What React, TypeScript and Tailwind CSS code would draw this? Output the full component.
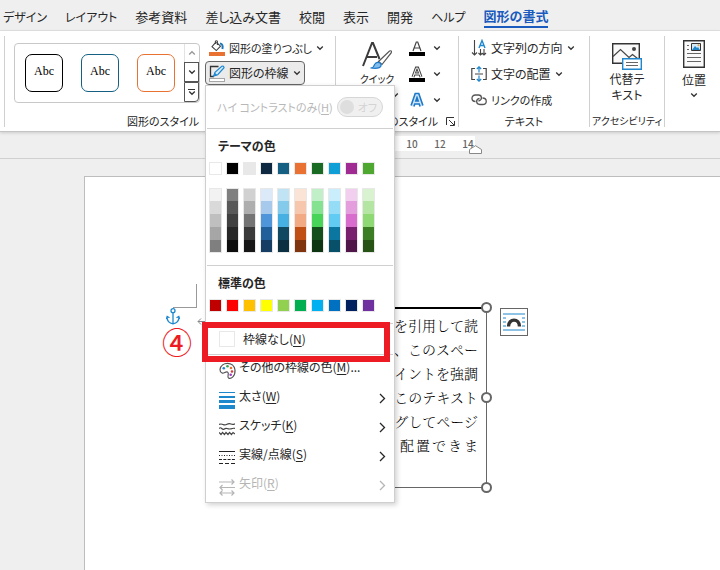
import type { ReactNode } from "react";

const themeColors = [
  "bg-white", "bg-black", "bg-[#e8e8e8]", "bg-[#0e2841]", "bg-[#156082]",
  "bg-[#e97132]", "bg-[#196b24]", "bg-[#0f9ed5]", "bg-[#a02b93]", "bg-[#4ea72e]",
];

const shadeColumns = [
  ["bg-[#f2f2f2]", "bg-[#d9d9d9]", "bg-[#bfbfbf]", "bg-[#a6a6a6]", "bg-[#7f7f7f]"],
  ["bg-[#7f7f7f]", "bg-[#595959]", "bg-[#404040]", "bg-[#262626]", "bg-[#0d0d0d]"],
  ["bg-[#d1d1d1]", "bg-[#aeaeae]", "bg-[#747474]", "bg-[#3a3a3a]", "bg-[#171717]"],
  ["bg-[#dce9f8]", "bg-[#a6c9ec]", "bg-[#4e95d9]", "bg-[#215f9a]", "bg-[#163e64]"],
  ["bg-[#c1e4f5]", "bg-[#83caeb]", "bg-[#45b0e1]", "bg-[#104862]", "bg-[#0b3041]"],
  ["bg-[#fbe3d6]", "bg-[#f6c6ad]", "bg-[#f2aa84]", "bg-[#c04f15]", "bg-[#80350e]"],
  ["bg-[#c1f0c8]", "bg-[#84e290]", "bg-[#47d459]", "bg-[#13501b]", "bg-[#0d3512]"],
  ["bg-[#caeefb]", "bg-[#95dcf7]", "bg-[#61cbf4]", "bg-[#0b76a0]", "bg-[#084f6a]"],
  ["bg-[#f2ceef]", "bg-[#e59edd]", "bg-[#d86dcd]", "bg-[#78206e]", "bg-[#50164a]"],
  ["bg-[#d9f2d0]", "bg-[#b4e5a2]", "bg-[#8ed973]", "bg-[#3b7d23]", "bg-[#275317]"],
];

const standardColors = [
  "bg-[#c00000]", "bg-[#ff0000]", "bg-[#ffc000]", "bg-[#ffff00]", "bg-[#92d050]",
  "bg-[#00b050]", "bg-[#00b0f0]", "bg-[#0070c0]", "bg-[#002060]", "bg-[#7030a0]",
];

const tabs = [
  { name: "デザイン", size: "text-[12px]" },
  { name: "レイアウト", size: "text-[12px]" },
  { name: "参考資料", size: "text-[13px]" },
  { name: "差し込み文書", size: "text-[13px]" },
  { name: "校閲", size: "text-[13px]" },
  { name: "表示", size: "text-[13px]" },
  { name: "開発", size: "text-[13px]" },
  { name: "ヘルプ", size: "text-[12px]" },
];

function Chevron() {
  return (
    <svg width="8" height="6" viewBox="0 0 8 6" fill="none" stroke="#333" strokeWidth="1.3" className="shrink-0">
      <path d="M1.2 1.5 4 4.3 6.8 1.5" />
    </svg>
  );
}

function FillIcon() {
  return (
    <svg width="16" height="17" viewBox="0 0 16 17" fill="none" className="shrink-0">
      <rect y="12" width="16" height="4" fill="#e97132" />
      <path d="M6.2 2.8 3 6.7 7.3 10.6 11.5 6.2 8 2.8ZM8.4 5V1.2Q7.4.2 6.4 1.2V4" stroke="#444" strokeWidth="1.1" />
      <path d="M11 3.6Q14.5 4 13.4 9" stroke="#1c78b8" strokeWidth="2" />
    </svg>
  );
}

function OutlineIcon() {
  return (
    <svg width="16" height="17" viewBox="0 0 16 17" fill="none" className="shrink-0">
      <path d="M9.5 1.5H1.5V11.5H5" stroke="#333" strokeWidth="1.3" />
      <path d="M4.7 11 6 7.3 12.8 1.2Q14.8.5 15 2.7L8.7 9.7Z" fill="#d8ecfa" stroke="#1e88d2" strokeWidth="1.2" />
      <path d="m4.5 11.3 1.3-3.5 2.4 2.3Z" fill="#1e88d2" />
      <rect x=".5" y="13.5" width="15" height="3" fill="#fff" stroke="#a6a6a6" />
    </svg>
  );
}

function QuickStyleIcon() {
  return (
    <svg width="32" height="30" viewBox="0 0 32 30" fill="none" className="shrink-0">
      <path d="M2 25 11 2H12L18.5 18M5.5 16H16" stroke="#3b3b3b" strokeWidth="2" />
      <path d="M17.5 20.5 28.5 10Q31 9 30.3 11.7L21 23.5Z" fill="#fff" stroke="#555" strokeWidth="1.2" />
      <path d="M9.5 27Q13 26.5 13.5 23.5 16 20 19.7 22.5 22 28.5 9.5 27Z" fill="#83bdec" stroke="#1e78c8" strokeWidth="1.2" />
    </svg>
  );
}

function LetterIcon({ kind }: { kind: "fill" | "outline" | "effect" }) {
  const path = "M4 11 7.3 2H8.7L12 11M5 8H11";
  return (
    <svg width="16" height="16" viewBox="0 0 16 16" fill="none">
      {kind === "fill" && <path d={path} stroke="#444" strokeWidth="1.2" />}
      {kind === "outline" && (
        <>
          <path d={path} stroke="#444" strokeWidth="3" />
          <path d={path} stroke="#fff" strokeWidth="1" />
        </>
      )}
      {kind === "effect" ? (
        <>
          <path d="M3.5 14 7.3 3H8.7L12.5 14M5 10.5H11" stroke="#1e78c8" strokeWidth="4.6" />
          <path d="M3.5 14 7.3 3H8.7L12.5 14M5 10.5H11" stroke="#cfe6fa" strokeWidth="1.4" />
        </>
      ) : (
        <rect y="12" width="16" height="4" fill="#000" />
      )}
    </svg>
  );
}

function DirectionIcon() {
  return (
    <svg width="16" height="18" viewBox="0 0 16 18" fill="none" stroke="#444" strokeWidth="1.1" className="shrink-0">
      <path d="M3.5 1V16M1 13.5 3.5 16 6 13.5M9.5 10V16M7.5 14 9.5 16 11.5 14M13 10V16M11.5 14.5 13 16 15 14" />
      <path d="M8 9 11 1.5 14 9M9 6.5H13" stroke="#2087cc" strokeWidth="1.4" />
    </svg>
  );
}

function AlignIcon() {
  return (
    <svg width="16" height="16" viewBox="0 0 16 16" fill="none" stroke="#444" strokeWidth="1.2" className="shrink-0">
      <path d="M4 2.5H.8V13.5H4M12 2.5H15.2V13.5H12M4 8H12" />
      <path d="M8 .8V6.5M5.8 3 8 .8 10.2 3M8 9.5V15.2M5.8 13 8 15.2 10.2 13" stroke="#2087cc" />
    </svg>
  );
}

function LinkIcon() {
  return (
    <svg width="16" height="14" viewBox="0 0 16 14" fill="none" stroke="#555" strokeWidth="1.3" className="shrink-0">
      <path d="M4.5 8.5C-.2 8.5-.2 2 4.5 2H7.5C11 2 11.8 7 7.5 8" />
      <path d="M11.5 5C16.5 5 16.5 11.5 11.5 11.5H8.8C5 11.5 4.3 6.3 8.5 5.4" />
    </svg>
  );
}

function AltTextIcon() {
  return (
    <svg width="30" height="28" viewBox="0 0 30 28" fill="none">
      <path d="M.7.7H27.3V20.3H.7Z" fill="#fafafa" stroke="#333" strokeWidth="1.4" />
      <path d="m1 13.5 7.5-7 8.5 8 3.5-3 5 4" stroke="#444" strokeWidth="1.2" />
      <circle cx="22" cy="6" r="2" fill="#444" />
      <path d="M10.7 15.7H29.3V26.3H10.7Z" fill="#fff" stroke="#2087cc" strokeWidth="1.4" />
      <path d="M14 19.5H26M14 22.5H26" stroke="#666" />
    </svg>
  );
}

function PositionIcon() {
  return (
    <svg width="22" height="28" viewBox="0 0 22 28" fill="none">
      <path d="M.7.7H21.3V27.3H.7Z" fill="#fafafa" stroke="#333" strokeWidth="1.4" />
      <path d="M4 5.5H6M4 9.5H6M4 13.5H18M4 17.5H18M4 21.5H18" stroke="#666" />
      <path d="M8.5 3.5H17.5V10.5H8.5Z" fill="#d5eaf9" stroke="#333" />
      <path d="m9 10 3-4 2 2 1-1 2 3Z" fill="#2087cc" />
      <circle cx="15.5" cy="5.3" r="1" fill="#e9a032" />
    </svg>
  );
}

function PaletteIcon() {
  return (
    <svg width="17" height="18" viewBox="0 0 17 18" fill="none">
      <path d="M1 7.5C2-.5 15-1 16 8 16.5 14 12 17.5 9.5 16 7.5 14.5 11 11.5 8.5 10 6.5 9 5 12 3 11 1.5 10.5 1 9 1 7.5Z" stroke="#555" strokeWidth="1.2" />
      <circle cx="4.8" cy="6.3" r="1.3" fill="#2087cc" />
      <circle cx="8.5" cy="4.2" r="1.3" fill="#35a853" />
      <circle cx="12" cy="6" r="1.3" fill="#e97132" />
      <circle cx="13" cy="9.5" r="1.3" fill="#d13c3c" />
      <circle cx="11.7" cy="12.7" r="1.3" fill="#a13cc0" />
    </svg>
  );
}

function WeightIcon() {
  return (
    <svg width="16" height="17" viewBox="0 0 16 17" fill="#1e88cc">
      <path d="M0 0H16V1H0ZM0 4H16V6H0ZM0 8H16V11H0ZM0 13H16V17H0Z" />
    </svg>
  );
}

function SketchIcon() {
  return (
    <svg width="16" height="14" viewBox="0 0 16 14" fill="none" stroke="#444" strokeWidth="1.2">
      <path d="M0 2.5Q2 1.5 4 2.5T8 2.3 12 2 16 1.8" />
      <path d="M0 6.5Q1.3 5 2.7 6.5T5.3 7 8 6.5 10.7 7 13.3 6.5 16 6.5" />
      <path d="M0 10.5 2 12.5 3.5 10.5 5.5 12.5 7 10.5 9 12.5 10.5 10.5 12.5 12.5 14 10.5 16 12" />
    </svg>
  );
}

function DashIcon() {
  return (
    <svg width="16" height="14" viewBox="0 0 16 14" fill="none" stroke="#222">
      <path d="M0 .5H16" />
      <path d="M0 4.5H16" strokeDasharray="1 1.5" />
      <path d="M0 8.5H16" strokeDasharray="3 1.3" />
      <path d="M0 12.5H16" strokeDasharray="4 2" />
    </svg>
  );
}

function ArrowsIcon() {
  return (
    <svg width="16" height="17" viewBox="0 0 16 17" fill="none" stroke="#b5b5b5" strokeWidth="1.2">
      <path d="M0 3H15M12.5.5 15 3 12.5 5.5M16 8.5H1M3.5 6 1 8.5 3.5 11M1 14H15M3.5 11.5 1 14 3.5 16.5M12.5 11.5 15 14 12.5 16.5" />
    </svg>
  );
}

function Swatches({ colors }: { colors: string[] }) {
  return (
    <div className="flex gap-1 pl-[3px]">
      {colors.map((c) => (
        <button key={c} type="button" aria-label="色" className={`size-[13px] border border-[#e8e8e8] ${c}`} />
      ))}
    </div>
  );
}

function Separator() {
  return <hr className="mx-px border-[#d0d0d0]" />;
}

function MenuItem({ icon, label, accel, tail = "", submenu = true, disabled = false }: {
  icon: ReactNode; label: string; accel: string; tail?: string; submenu?: boolean; disabled?: boolean;
}) {
  return (
    <button
      type="button"
      role="menuitem"
      disabled={disabled}
      className={`flex h-[29px] w-full items-center pr-2 pl-[13px] text-left ${disabled ? "text-[#b5b5b5]" : "text-[#262626]"}`}
    >
      <span className="flex w-5 pt-[3px]">{icon}</span>
      <span className="flex-1 pb-[5px]">
        {label}(<u className="underline-offset-2">{accel}</u>){tail}
      </span>
      {submenu && (
        <svg width="7" height="11" viewBox="0 0 7 11" fill="none" stroke="currentColor" strokeWidth="1.3">
          <path d="M1 1 5.5 5.5 1 10" />
        </svg>
      )}
    </button>
  );
}

function OutlineMenu() {
  return (
    <div role="menu" className="absolute top-full left-0 z-10 w-[190px] border border-[#cfcfcf] bg-white pb-[2px] shadow-[2px_2px_5px_rgba(0,0,0,0.18)]">
      <label className="flex h-[42px] items-center justify-between pr-[11px] pl-[11px] whitespace-nowrap text-[#b8b8b8]">
        <span className="text-[11px]">ハイ コントラストのみ(<u className="underline-offset-2">H</u>)</span>
        <span className="relative flex">
          <input type="checkbox" role="switch" disabled className="h-5 w-[46px] appearance-none rounded-full border border-[#d6d6d6] bg-[#f0f0f0]" />
          <span className="absolute top-[3px] left-[3px] size-[14px] rounded-full bg-[#dedede]" />
          <span className="absolute top-px right-[6px] text-[11px] leading-[18px] text-[#d4d4d4]">オフ</span>
        </span>
      </label>
      <Separator />
      <h2 className="flex h-[33px] items-center pl-3 font-bold">テーマの色</h2>
      <Swatches colors={themeColors} />
      <div className="flex gap-1 pt-[13px] pb-3 pl-[3px]">
        {shadeColumns.map((column) => (
          <div key={column[3]} className="flex w-[13px] flex-col border border-[#e8e8e8]">
            {column.map((c) => (
              <button key={c} type="button" aria-label="色" className={`h-[13px] first:h-3 last:h-3 ${c}`} />
            ))}
          </div>
        ))}
      </div>
      <Separator />
      <h2 className="flex h-[33px] items-center pl-3 font-bold">標準の色</h2>
      <Swatches colors={standardColors} />
      <div className="relative mt-[11px]">
        <Separator />
        <button type="button" role="menuitem" className="flex h-[30px] w-full items-center gap-2 pl-[13px] text-[#262626]">
          <span className="size-4 border border-[#e8e8e8] bg-white" />
          <span>枠線なし(<u className="underline-offset-2">N</u>)</span>
        </button>
        <Separator />
        <div className="absolute -top-px -left-1 h-10 w-[188px] border-6 border-[#ed1c24]" />
      </div>
      <MenuItem icon={<PaletteIcon />} label="その他の枠線の色" accel="M" tail="..." submenu={false} />
      <MenuItem icon={<WeightIcon />} label="太さ" accel="W" />
      <MenuItem icon={<SketchIcon />} label="スケッチ" accel="K" />
      <MenuItem icon={<DashIcon />} label="実線/点線" accel="S" />
      <MenuItem icon={<ArrowsIcon />} label="矢印" accel="R" disabled />
    </div>
  );
}

function Gallery() {
  return (
    <div className="flex h-[60px] w-[186px] shrink-0 rounded border border-[#c8c8c8]">
      <div className="flex flex-1 items-center gap-[18px] pl-[10px] font-['Liberation_Serif',serif] text-[12px] text-black">
        <button type="button" className="h-[38px] w-[38px] rounded-[7px] border border-black pb-1">Abc</button>
        <button type="button" className="h-[38px] w-[38px] rounded-[7px] border border-[#156082] pb-1">Abc</button>
        <button type="button" className="h-[38px] w-[38px] rounded-[7px] border border-[#e97132] pb-1">Abc</button>
      </div>
      <div className="flex w-[15px] flex-col">
        <button type="button" aria-label="上へ" className="flex flex-1 items-center justify-center border-l border-[#c8c8c8] opacity-50">
          <span className="rotate-180"><Chevron /></span>
        </button>
        <button type="button" aria-label="下へ" className="flex flex-1 items-center justify-center border border-[#555]">
          <Chevron />
        </button>
        <button type="button" aria-label="その他" className="flex flex-1 flex-col items-center justify-center rounded-br border border-[#555]">
          <span className="h-px w-[7px] bg-[#333]" />
          <Chevron />
        </button>
      </div>
    </div>
  );
}

function Ribbon() {
  const group = "flex shrink-0 flex-col border-l border-[#d0d0d0]";
  const row = "flex h-6 items-center whitespace-nowrap";
  const title = "text-[11px] leading-3 whitespace-nowrap";
  return (
    <div className="relative z-10 flex border-b border-[#c4c4c4] bg-white pt-[5px] pb-1 pl-1 shadow-[0_1px_3px_rgba(0,0,0,0.15)]">
      <section className={`${group} w-[331px]`}>
        <div className="flex h-[79px] gap-[5px] pl-[9px]">
          <div className="pt-[7px]"><Gallery /></div>
          <div className="flex flex-col gap-px">
            <button type="button" className={`${row} gap-1 pl-1`}>
              <FillIcon /><span className="text-[11px]">図形の塗りつぶし</span><Chevron />
            </button>
            <div className="relative">
              <button type="button" aria-expanded="true" className="flex h-6 items-center gap-1 rounded border border-[#666] bg-[#ebebeb] px-[3px] whitespace-nowrap">
                <OutlineIcon />図形の枠線<Chevron />
              </button>
              <OutlineMenu />
            </div>
          </div>
        </div>
        <h2 className={`${title} pl-[122px]`}>図形のスタイル</h2>
      </section>

      <section className={`${group} w-[123px]`}>
        <div className="flex h-[79px] justify-between pr-[17px] pl-[25px]">
          <button type="button" className="flex w-8 flex-col items-center pt-[5px] text-[10px] leading-4 whitespace-nowrap">
            <QuickStyleIcon />
            クイック
            <span className="flex items-center">スタイル<Chevron /></span>
          </button>
          <div className="flex flex-col gap-[2px]">
            <button type="button" aria-label="文字の塗りつぶし" className={`${row} gap-2`}><LetterIcon kind="fill" /><Chevron /></button>
            <button type="button" aria-label="文字の輪郭" className={`${row} gap-2`}><LetterIcon kind="outline" /><Chevron /></button>
            <button type="button" aria-label="文字の効果" className={`${row} gap-2`}><LetterIcon kind="effect" /><Chevron /></button>
          </div>
        </div>
        <div className="flex items-center justify-end gap-2 pr-[3px]">
          <h2 className={title}>ワードアートのスタイル</h2>
          <svg width="9" height="9" viewBox="0 0 9 9" fill="none" stroke="#333" className="shrink-0">
            <path d="M.5 8V.5H8M3 3 8 8M8.5 4V8.5H4" />
          </svg>
        </div>
      </section>

      <section className={`${group} w-[131px]`}>
        <div className="flex h-[79px] flex-col gap-[2px] pl-3">
          <button type="button" className={`${row} gap-1`}><DirectionIcon />文字列の方向<Chevron /></button>
          <button type="button" className={`${row} gap-1`}><AlignIcon />文字の配置<Chevron /></button>
          <button type="button" className={`${row} gap-1`}><LinkIcon /><span className="text-[11px]">リンクの作成</span></button>
        </div>
        <h2 className={`${title} text-center`}>テキスト</h2>
      </section>

      <section className={`${group} w-[75px]`}>
        <button type="button" className="flex h-[79px] flex-col items-center pt-[7px] leading-4">
          <AltTextIcon />
          <span>代替テ<br />キスト</span>
        </button>
        <h2 className="text-center text-[10px] leading-3 whitespace-nowrap">アクセシビリティ</h2>
      </section>

      <section className="flex grow flex-col border-l border-[#d0d0d0] pl-[17px]">
        <button type="button" className="flex w-6 flex-col items-center pt-1 leading-4 whitespace-nowrap">
          <PositionIcon />
          <span className="pt-1">位置</span>
          <span className="pt-1"><Chevron /></span>
        </button>
      </section>
    </div>
  );
}

function Handle({ className }: { className: string }) {
  return <span className={`absolute -right-[6px] size-[11px] rounded-full border-2 border-[#666] bg-white ${className}`} />;
}

function Document() {
  return (
    <main className="flex-1 pt-[17px] pl-[84px]">
      <div className="relative h-full border-t border-l border-[#bdbdbd] bg-white">
        <div className="absolute top-[107px] left-[88px] h-6 w-6 border-r border-b border-[#999]" />
        <svg width="14" height="17" viewBox="0 0 14 17" fill="none" stroke="#1e88cc" strokeWidth="1.3" className="absolute top-[131px] left-[81px]">
          <circle cx="7" cy="2.7" r="2" />
          <path d="M7 4.7V16M1 8.5Q1 15 7 15.8 13 15 13 8.5M.3 11 1.2 8.5 3.5 9.8M13.7 11 12.8 8.5 10.5 9.8" />
        </svg>
        <svg width="10" height="9" viewBox="0 0 10 9" fill="none" stroke="#888" className="absolute top-[139px] left-[112px]">
          <path d="M9 0V5.5H1M4 2.5 1 5.5 4 8.5" />
        </svg>
        <span className="absolute top-[142px] left-[77px] text-[30px] leading-[44px] font-medium text-[#ed1c24]">④</span>

        <div className="absolute top-[130px] left-[201px] h-[181px] w-[201px] border border-t-2 border-[#666] border-t-black bg-white">
          <p className="ml-auto w-[92px] pt-1 pr-2 text-right font-['Noto_Serif_CJK_JP','Noto_Sans_CJK_JP',serif] text-[14px] leading-6 font-light whitespace-nowrap text-black [font-feature-settings:normal]">
            を引用して読<br />、このスペー<br />イントを強調<br />このテキスト<br />グしてページ
            <span className="ml-auto flex w-[78px] justify-between">
              {[..."配置できま"].map((ch) => <span key={ch}>{ch}</span>)}
            </span>
          </p>
          <Handle className="-top-[7px]" />
          <Handle className="top-[83px]" />
          <Handle className="-bottom-[6px]" />
        </div>

        <button type="button" aria-label="レイアウト オプション" className="absolute top-[131px] left-[415px] flex size-7 items-center justify-center border border-[#666] bg-white">
          <svg width="22" height="18" viewBox="0 0 22 18" fill="none" stroke="#2087cc" strokeWidth="1.2">
            <path d="M0 1H22M0 5H3M19 5H22M0 9H3M19 9H22M0 13H3M19 13H22M0 17H22" />
            <path d="M5.5 13.5C5.5 5 16.5 5 16.5 13.5" stroke="#333" strokeWidth="3.4" />
          </svg>
        </button>
      </div>
    </main>
  );
}

export default function App() {
  return (
    <div className="flex h-screen flex-col overflow-hidden bg-[#efefef] font-['Noto_Sans_CJK_JP',sans-serif] text-[12px] text-[#262626] [font-feature-settings:'palt']">
      <nav className="flex h-[31px] shrink-0 items-center gap-[18px] border-b border-[#e2e2e2] pt-1 pl-[3px] whitespace-nowrap">
        {tabs.map((tab) => (
          <button key={tab.name} type="button" className={tab.size}>{tab.name}</button>
        ))}
        <button type="button" className="border-b-2 border-[#185abd] text-[13px] font-bold text-[#185abd]">図形の書式</button>
      </nav>
      <Ribbon />
      <div className="flex h-[27px] shrink-0 border-b border-[#d0d0d0] pt-1 pl-[205px] text-[10px] font-medium text-[#666]">
        <div className="relative flex h-[15px] w-[270px] justify-end bg-white leading-[15px]">
          <div className="-mr-[7px] flex text-center">
            <span className="w-7">10</span>
            <span className="w-7">12</span>
            <span className="w-7">14</span>
          </div>
          <svg width="13" height="9" viewBox="0 0 13 9" fill="#fff" stroke="#888" className="absolute top-[9px] -right-[7px]">
            <path d="M.5 8.5V4.5L6.5.7 12.5 4.5V8.5Z" />
          </svg>
        </div>
      </div>
      <Document />
    </div>
  );
}
